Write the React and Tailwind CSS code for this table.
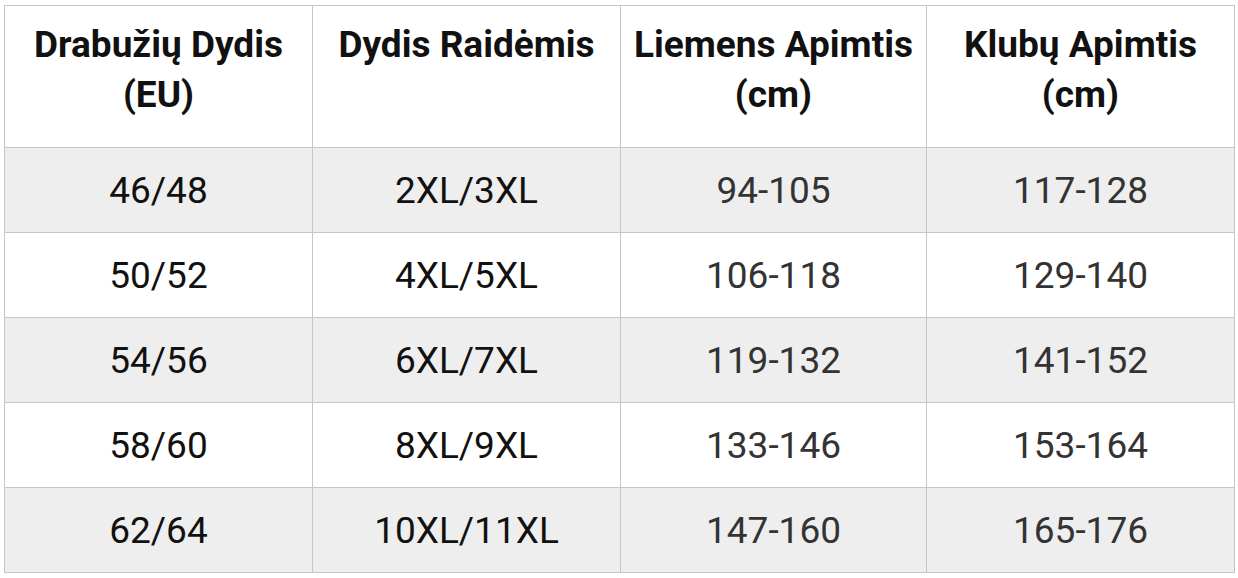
export default function App() {
  const rows = [
    ["46/48", "2XL/3XL", "94-105", "117-128"],
    ["50/52", "4XL/5XL", "106-118", "129-140"],
    ["54/56", "6XL/7XL", "119-132", "141-152"],
    ["58/60", "8XL/9XL", "133-146", "153-164"],
    ["62/64", "10XL/11XL", "147-160", "165-176"],
  ];
  const headers = [
    ["Drabužių Dydis", "(EU)"],
    ["Dydis Raidėmis"],
    ["Liemens Apimtis", "(cm)"],
    ["Klubų Apimtis", "(cm)"],
  ];
  const colors = ["text-[#111111]", "text-[#111111]", "text-[#333333]", "text-[#333333]"];
  return (
    <div className="w-[1238px] h-[578px] bg-white pt-[5px] pl-[4px]" style={{ fontFamily: "Roboto, 'Noto Sans', sans-serif" }}>
      <table className="w-[1230px] table-fixed border-collapse border border-[#c6c6c6]">
        <colgroup>
          <col className="w-[308px]" />
          <col className="w-[308px]" />
          <col className="w-[306px]" />
          <col className="w-[308px]" />
        </colgroup>
        <thead>
          <tr className="h-[142px]">
            {headers.map((h, i) => (
              <th key={i} className="border border-[#c6c6c6] align-top pt-[14px] px-1 text-[37px] leading-[50px] font-bold text-[#111111] text-center whitespace-nowrap">
                {h.map((l, j) => (
                  <div key={j}>{l}</div>
                ))}
              </th>
            ))}
          </tr>
        </thead>
        <tbody>
          {rows.map((r, i) => (
            <tr key={i} className={`h-[85px] ${i % 2 === 0 ? "bg-[#eeeeee]" : "bg-white"}`}>
              {r.map((c, j) => (
                <td key={j} className={`border border-[#c6c6c6] text-center align-middle text-[37px] leading-none ${colors[j]}`}>
                  {c}
                </td>
              ))}
            </tr>
          ))}
        </tbody>
      </table>
    </div>
  );
}
